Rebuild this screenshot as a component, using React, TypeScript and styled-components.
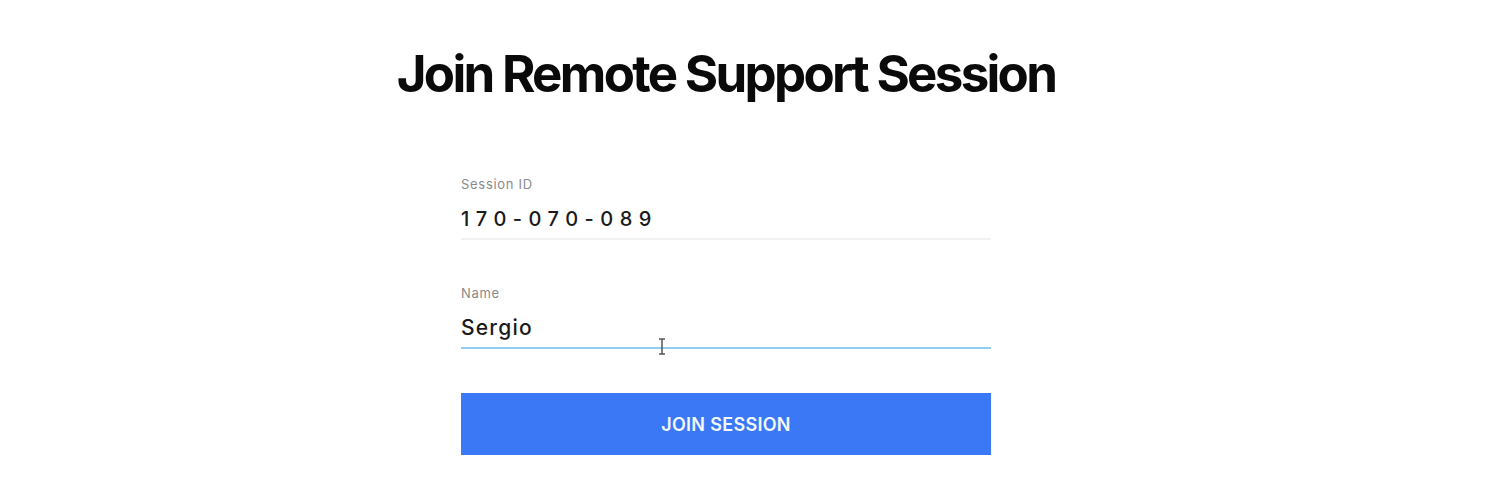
import styled, { createGlobalStyle } from "styled-components";

const GlobalStyle = createGlobalStyle`
  body {
    margin: 0;
    background: #ffffff;
    font-family: Inter, "Liberation Sans", sans-serif;
  }
`;

const Page = styled.main`
  display: flex;
  flex-direction: column;
  align-items: center;
  padding: 42px 36px 0 0;
`;

const Title = styled.h1`
  margin: 0;
  font-size: 51px;
  line-height: 64px;
  font-weight: 700;
  letter-spacing: -2.7px;
  color: #0a0a0a;
`;

const Form = styled.form`
  width: 530px;
  margin: 71px 0 0 0;
  display: flex;
  flex-direction: column;
`;

const Field = styled.label<{ $last?: boolean }>`
  display: flex;
  flex-direction: column;
  margin-bottom: ${(p) => (p.$last ? "44px" : "46px")};
  position: relative;
`;

const Label = styled.span`
  font-size: 13px;
  line-height: 14px;
  letter-spacing: 0.7px;
  color: #8a8a8a;
`;

const Value = styled.div<{ $spaced?: boolean; $active?: boolean }>`
  font-size: ${(p) => (p.$spaced ? "20px" : "21px")};
  line-height: 28px;
  font-weight: 500;
  color: #1a1a1a;
  letter-spacing: ${(p) => (p.$spaced ? "6.5px" : "1.2px")};
  padding: 14px 0 5px;
  border-bottom: 2px solid ${(p) => (p.$active ? "#8fcdf0" : "#f1f1f1")};
`;

const Cursor = styled.svg`
  position: absolute;
  left: 197px;
  bottom: -6px;
`;

const Button = styled.button`
  height: 62px;
  border: none;
  background: #3a78f5;
  color: #f4f8ff;
  font-family: Inter, "Liberation Sans", sans-serif;
  font-size: 18px;
  font-weight: 600;
  letter-spacing: 0.3px;
  cursor: pointer;
`;

export default function App() {
  return (
    <>
      <GlobalStyle />
      <Page>
        <Title>Join Remote Support Session</Title>
        <Form onSubmit={(e) => e.preventDefault()}>
          <Field>
            <Label>Session ID</Label>
            <Value $spaced>170-070-089</Value>
          </Field>
          <Field $last>
            <Label>Name</Label>
            <Value $active>Sergio</Value>
            <Cursor width="8" height="17" viewBox="0 0 8 17">
              <path
                d="M1 1h6M4 1v15M1 16h6"
                stroke="#555"
                strokeWidth="1.5"
                fill="none"
              />
            </Cursor>
          </Field>
          <Button type="submit">JOIN SESSION</Button>
        </Form>
      </Page>
    </>
  );
}
